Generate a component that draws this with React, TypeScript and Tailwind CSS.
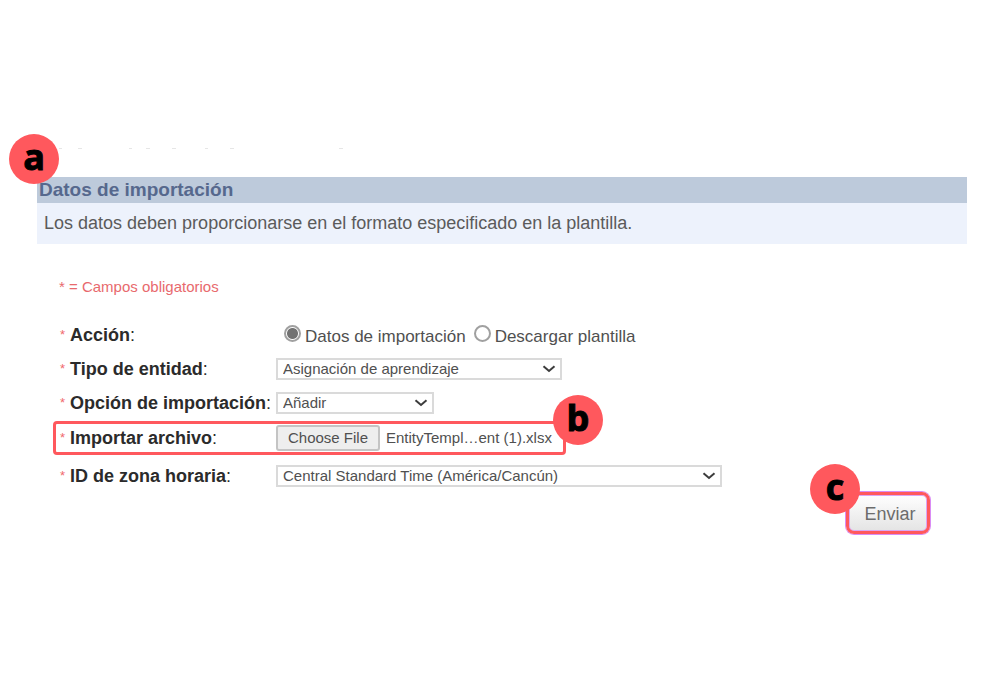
import { useRef, useState } from "react";
import type { ReactNode } from "react";

function Badge({ letter, className }: { letter: string; className: string }) {
  return (
    <span
      className={`absolute z-10 flex size-[50px] items-center justify-center rounded-full bg-[#ff585d] pb-1 font-['Open_Sans',sans-serif] text-[36px] leading-none font-bold text-black [-webkit-text-stroke:1px_black] ${className}`}
    >
      {letter}
    </span>
  );
}

function Row({
  label,
  htmlFor,
  className = "border-transparent",
  children,
}: {
  label: string;
  htmlFor: string;
  className?: string;
  children: ReactNode;
}) {
  return (
    <div className={`relative flex h-[34px] items-center rounded border-[3px] pl-1 ${className}`}>
      <span className="w-[10px] shrink-0 text-[13px] leading-4 text-[#f0696c]">*</span>
      <label htmlFor={htmlFor} className="w-[206px] shrink-0 text-[18px] leading-5 whitespace-nowrap text-[#2b2b2b]">
        <span className="font-bold">{label}</span>:
      </label>
      {children}
    </div>
  );
}

function Select({ id, value, className }: { id: string; value: string; className: string }) {
  return (
    <span className={`relative flex items-center ${className}`}>
      <select
        id={id}
        className="h-[22px] w-full appearance-none border-2 border-[#dadada] bg-white pr-8 pl-[5px] text-[15px] leading-4 text-[#505050]"
      >
        <option>{value}</option>
      </select>
      <svg
        viewBox="0 0 14 8"
        className="pointer-events-none absolute right-[6px] h-2 w-[14px] fill-none stroke-[#3c3c3c] stroke-2"
        aria-hidden="true"
      >
        <path d="M1.5 1.2 L7 6 L12.5 1.2" />
      </svg>
    </span>
  );
}

const radioClass =
  "mb-1 size-[17px] shrink-0 appearance-none rounded-full border-2 border-[#a0a0a0] bg-white checked:bg-[radial-gradient(circle,#727272_0_5px,#fff_6px)]";

export default function App() {
  const fileInput = useRef<HTMLInputElement>(null);
  const [fileName, setFileName] = useState("EntityTempl…ent (1).xlsx");

  return (
    <main className="min-h-screen bg-white font-['Liberation_Sans',Arial,sans-serif]">
      <div className="flex flex-col pt-[148px] pr-[33px] pl-[37px]">
        <svg className="h-[29px] w-[320px] fill-[#e6e6e6]" viewBox="0 0 320 29" aria-hidden="true">
          <path d="M22 0h3v1h-3zM41 0h4v1h-4zM92 0h3v1h-3zM109 0h4v1h-4zM135 0h4v1h-4zM168 0h3v1h-3zM193 0h4v1h-4zM302 0h4v1h-4z" />
        </svg>
        <section className="relative">
          <Badge letter="a" className="-top-[43px] -left-7" />
          <h1 className="h-[26px] bg-[#bdcadb] pl-[2px] text-[19px] leading-[26px] font-bold text-[#56688d]">
            Datos de importación
          </h1>
          <p className="h-[41px] bg-[#edf2fc] pl-[7px] text-[18px] leading-10 text-[#5b5b5b]">
            Los datos deben proporcionarse en el formato especificado en la plantilla.
          </p>
        </section>

        <form className="flex flex-col items-start pt-[33px] pl-4" onSubmit={(e) => e.preventDefault()}>
          <p className="pl-[6px] text-[15px] leading-5 text-[#e8696d]">* = Campos obligatorios</p>

          <div className="flex flex-col items-start pt-[21px]">
            <Row label="Acción" htmlFor="import">
              <div className="flex items-center pl-2 text-[17px] leading-5 whitespace-nowrap text-[#505050]">
                <input id="import" type="radio" name="action" defaultChecked className={radioClass} />
                <label htmlFor="import" className="pt-1 pl-1">
                  Datos de importación
                </label>
                <input id="download" type="radio" name="action" className={`ml-2 ${radioClass}`} />
                <label htmlFor="download" className="pt-1 pl-1">
                  Descargar plantilla
                </label>
              </div>
            </Row>
            <Row label="Tipo de entidad" htmlFor="entity">
              <Select id="entity" value="Asignación de aprendizaje" className="w-[286px]" />
            </Row>
            <Row label="Opción de importación" htmlFor="option">
              <Select id="option" value="Añadir" className="w-[158px]" />
            </Row>
            <div className="pt-px">
              <Row label="Importar archivo" htmlFor="file" className="border-[#ff585d] pr-[11px]">
                <input
                  ref={fileInput}
                  id="file"
                  type="file"
                  className="hidden"
                  onChange={(e) => setFileName(e.target.files?.[0]?.name ?? "")}
                />
                <button
                  type="button"
                  onClick={() => fileInput.current?.click()}
                  className="h-[26px] w-[104px] shrink-0 rounded-[3px] border-2 border-[#c4c4c4] bg-[#eeeeee] text-[15px] leading-5 text-[#505050]"
                >
                  Choose File
                </button>
                <span className="pl-[6px] text-[15px] leading-5 whitespace-nowrap text-[#505050]">{fileName}</span>
                <Badge letter="b" className="-top-[29px] -right-10" />
              </Row>
            </div>
            <div className="pt-1">
              <Row label="ID de zona horaria" htmlFor="zone">
                <Select id="zone" value="Central Standard Time (América/Cancún)" className="w-[446px]" />
              </Row>
            </div>
          </div>

          <div className="relative -mt-px mr-[37px] self-end">
            <button
              type="submit"
              className="block h-[42px] w-[84px] rounded-lg border-[3px] border-[#ff585d] bg-linear-to-b from-white to-[#e4e4e4] pt-[2px] pl-1 text-[18px] text-[#6c6c6c] ring ring-[#d98cf5] inset-ring inset-ring-[#dba6f5]"
            >
              Enviar
            </button>
            <Badge letter="c" className="-top-7 -left-9" />
          </div>
        </form>
      </div>
    </main>
  );
}
